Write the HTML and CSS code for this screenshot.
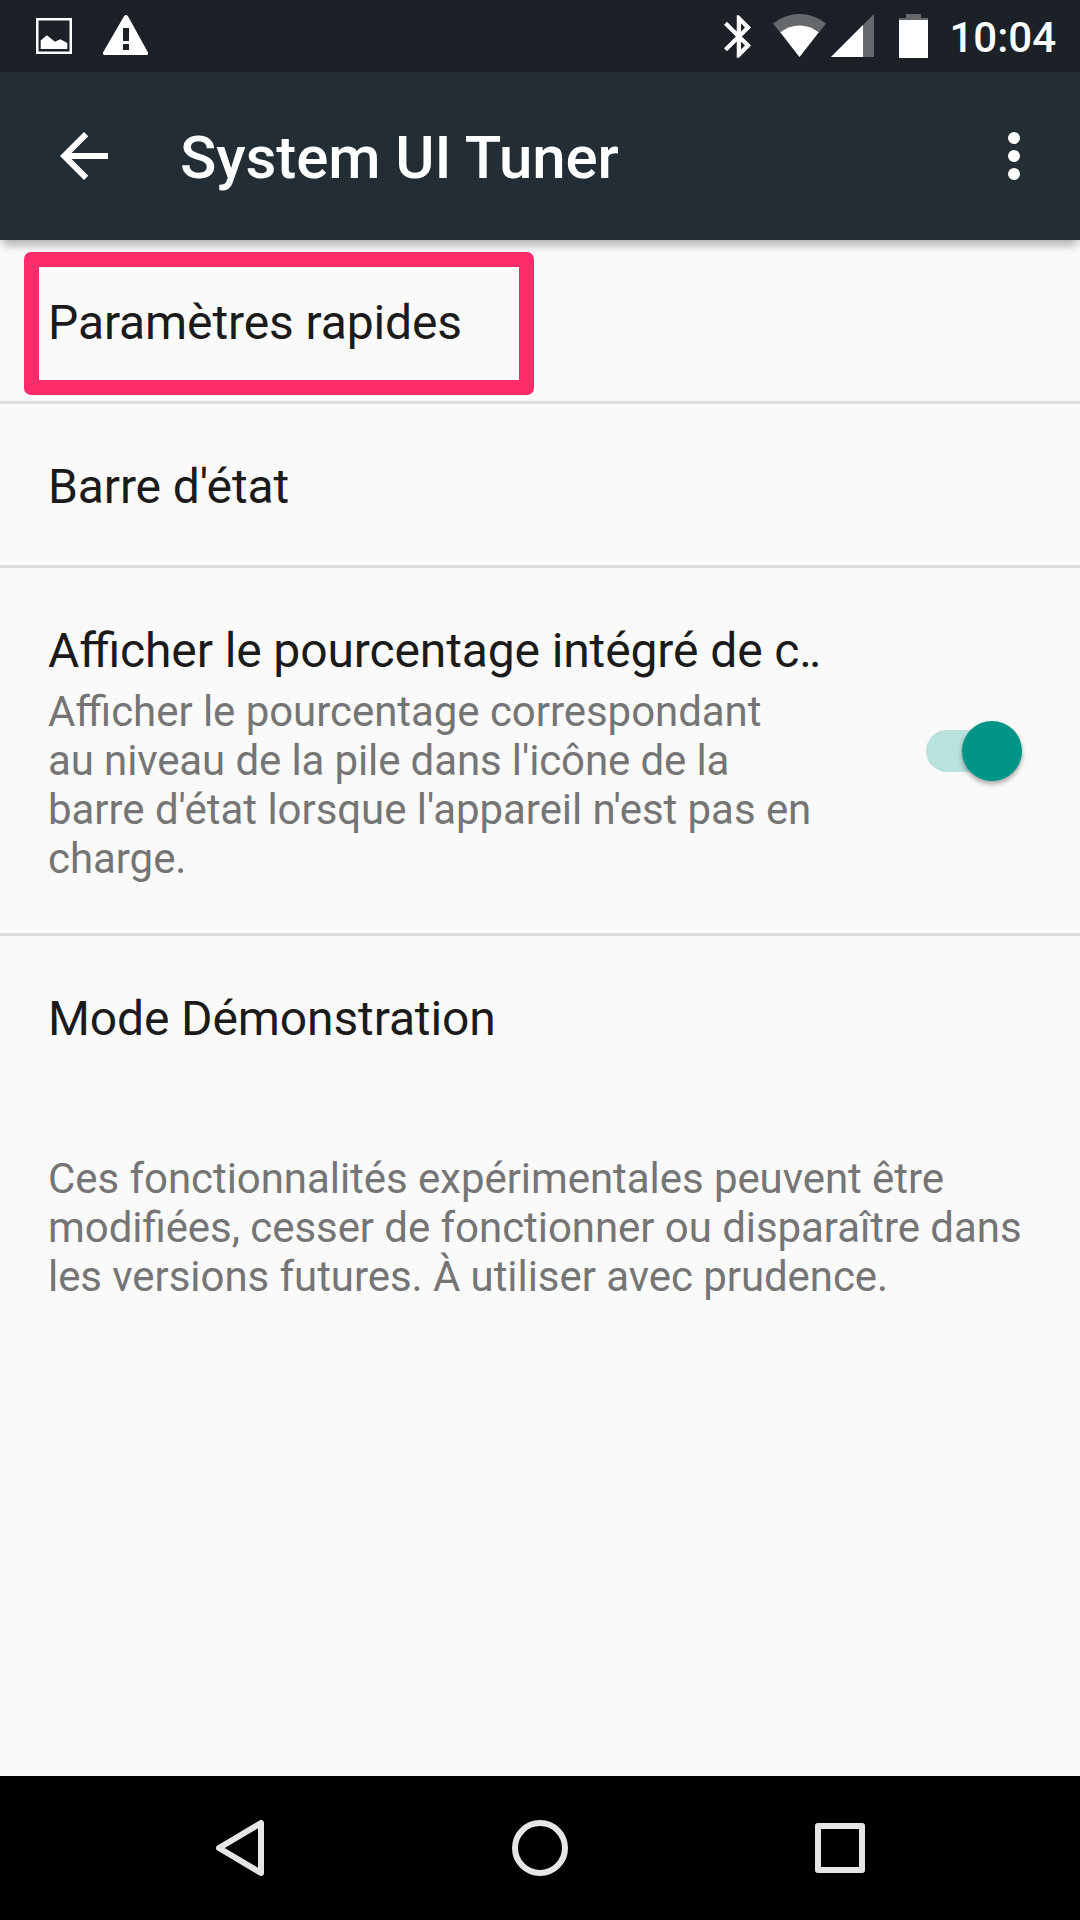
FILE: index.html
```html
<!DOCTYPE html>
<html lang="fr">
<head>
    <meta charset="UTF-8">
    <meta name="viewport" content="width=device-width, initial-scale=1.0">
    <title>System UI Tuner</title>

    <link rel="stylesheet" href="styles.css">
</head>
<body>
    <!-- Barre d'état -->
    <div class="status-bar">
        <svg class="icon-image" width="36" height="36" viewBox="0 0 36 36">
            <rect x="1.25" y="1.25" width="33.5" height="33.5" fill="none" stroke="#fff" stroke-width="2.5"/>
            <path d="M4.7 31V22.5L10.8 17.2 19 23.8 24.3 21.3 31.3 25V31Z" fill="#fff"/>
        </svg>
        <svg class="icon-warning" width="46" height="41" viewBox="0 0 46 41">
            <path fill="#fff" fill-rule="evenodd" d="M21 1.2Q23 -1 25 1.2L45 37.5V38.5Q45 40 43.5 40H1.5Q0 40 0 38.5V37.5ZM20 13H26V26H20ZM20 29H26V35H20Z"/>
        </svg>
        <div class="status-right">
            <svg class="icon-bluetooth" width="27" height="43" viewBox="5 2 12.71 20">
                <path fill="#fff" d="M17.71 7.71L12 2h-1v7.59L6.41 5 5 6.41 10.59 12 5 17.59 6.41 19 11 14.41V22h1l5.71-5.71-4.3-4.29 4.3-4.29zM13 5.83l1.88 1.88L13 9.59V5.83zm1.88 10.46L13 18.17v-3.76l1.88 1.88z"/>
            </svg>
            <svg class="icon-wifi" width="54" height="44" viewBox="0 0 54 44">
                <path d="M0 9.5Q12 0 26.5 0T53 9.5L26.5 43Z" fill="#65696c"/>
                <path d="M7.3 18.3Q16 11.5 26.5 11.5T45.7 18.3L26.5 43Z" fill="#fff"/>
            </svg>
            <svg class="icon-signal" width="44" height="44" viewBox="0 0 44 44">
                <path d="M0 43 43 0V43Z" fill="#65696c"/>
                <path d="M0 43 32 11V43Z" fill="#fff"/>
            </svg>
            <svg class="icon-battery" width="29" height="44" viewBox="0 0 29 44">
                <path d="M7 0H22V4H29V8H0V4H7Z" fill="#65696c"/>
                <path d="M0 6H29V44H0Z" fill="#fff"/>
            </svg>
            <span class="clock">10:04</span>
        </div>
    </div>

    <!-- Barre d'application -->
    <header class="app-bar">
        <svg class="icon-back" width="48" height="48" viewBox="4 4 16 16">
            <path fill="#fff" d="M20 11H7.83l5.59-5.59L12 4l-8 8 8 8 1.41-1.41L7.83 13H20v-2z"/>
        </svg>
        <h1>System UI Tuner</h1>
        <svg class="icon-more" width="12" height="48" viewBox="0 0 12 48">
            <g fill="#fff">
                <circle cx="6" cy="6" r="6"/>
                <circle cx="6" cy="24" r="6"/>
                <circle cx="6" cy="42" r="6"/>
            </g>
        </svg>
    </header>

    <!-- Liste des réglages -->
    <main>
        <div class="row">
            <p class="row-title">Paramètres rapides</p>
            <div class="highlight"></div>
        </div>
        <div class="row">
            <p class="row-title">Barre d'état</p>
        </div>
        <div class="row row-switch">
            <div class="row-text">
                <p class="row-title">Afficher le pourcentage intégré de c<span class="dots">..</span></p>
                <p class="summary">Afficher le pourcentage correspondant<br><span class="tight">au niveau de la pile dans l'icône de la</span><br>barre d'état lorsque l'appareil n'est pas en<br>charge.</p>
            </div>
            <div class="switch">
                <div class="thumb"></div>
            </div>
        </div>
        <div class="row row-last">
            <p class="row-title">Mode Démonstration</p>
        </div>
        <p class="summary note">Ces fonctionnalités expérimentales peuvent être<br>modifiées, cesser de fonctionner ou disparaître dans<br>les versions futures. À utiliser avec prudence.</p>
    </main>

    <!-- Barre de navigation -->
    <nav class="nav-bar">
        <svg width="56" height="56" viewBox="0 0 56 56">
            <path d="M49 3V53L7 28Z" fill="none" stroke="#e6e6e6" stroke-width="6" stroke-linejoin="round"/>
        </svg>
        <svg width="56" height="56" viewBox="0 0 56 56">
            <circle cx="28" cy="28" r="25" fill="none" stroke="#e6e6e6" stroke-width="6"/>
        </svg>
        <svg width="56" height="56" viewBox="0 0 56 56">
            <rect x="6" y="6" width="44" height="44" fill="none" stroke="#e6e6e6" stroke-width="6" stroke-linejoin="round"/>
        </svg>
    </nav>
</body>
</html>
```
FILE: styles.css
```css
* {
    box-sizing: border-box;
}

body {
    margin: 0;
    height: 1920px;
    display: flex;
    flex-direction: column;
    font-family: Roboto, sans-serif;
    background-color: #fafafa;
    color: #1b1b1b;
    overflow: hidden;
}

h1, p {
    margin: 0;
}

svg {
    display: block;
    flex: none;
}

/* Barre d'état */
.status-bar {
    height: 72px;
    flex: none;
    display: flex;
    align-items: flex-start;
    padding-left: 36px;
    padding-right: 24px;
    background-color: #1b2127;
}

.icon-image {
    margin-top: 18px;
}

.icon-warning {
    margin: 15px 0 0 31px;
}

.status-right {
    display: flex;
    margin-left: auto;
    padding-top: 14px;
}

.icon-bluetooth {
    margin-top: 1px;
}

.icon-wifi {
    margin-left: 22px;
}

.icon-signal {
    margin-left: 4px;
}

.icon-battery {
    margin-left: 24px;
}

.clock {
    margin-left: 21px;
    margin-top: -1px;
    font-size: 42px;
    line-height: 49px;
    font-weight: 500;
    color: #fff;
}

/* Barre d'application */
.app-bar {
    height: 168px;
    flex: none;
    display: flex;
    align-items: center;
    padding: 0 60px;
    background-color: #222d35;
    color: #fff;
    box-shadow: 0 7px 9px -2px rgba(0, 0, 0, 0.3);
}

.app-bar h1 {
    margin-left: 72px;
    padding-top: 4px;
    font-size: 60px;
    line-height: 70px;
    font-weight: 500;
    letter-spacing: -0.08px;
}

.icon-more {
    margin-left: auto;
}

/* Liste */
main {
    flex: 1;
}

.row {
    position: relative;
    height: 164px;
    display: flex;
    align-items: center;
    padding: 4px 48px 0;
    border-bottom: 3px solid #dcdcdc;
}

.row-title {
    font-size: 48px;
    line-height: 56px;
    letter-spacing: -0.12px;
    white-space: nowrap;
    font-feature-settings: "liga" 1; /* garde la ligature ffi */
}

.dots {
    letter-spacing: -2.8px;
}

.summary {
    font-size: 42px;
    line-height: 49px;
    color: #757575;
    letter-spacing: -0.05px;
    white-space: nowrap;
    font-feature-settings: "liga" 1;
}

.tight {
    letter-spacing: -0.12px;
}

.row-switch {
    height: 368px;
    justify-content: space-between;
}

.row-switch .summary {
    margin-top: 8px;
}

.row-last {
    border-bottom-color: transparent;
}

.note {
    padding: 54px 48px 0;
    letter-spacing: -0.06px;
}

/* Cadre autour du premier réglage */
.highlight {
    position: absolute;
    left: 24px;
    top: 12px;
    width: 510px;
    height: 143px;
    border: 15px solid #ff2b6b;
    border-radius: 7px;
}

/* Interrupteur */
.switch {
    width: 90px;
    height: 42px;
    margin-right: 16px;
    margin-top: -4px;
    display: flex;
    align-items: center;
    justify-content: flex-end;
    border-radius: 21px;
    background-color: #b9e1dd;
}

.thumb {
    width: 60px;
    height: 60px;
    margin-right: -6px;
    flex: none;
    border-radius: 50%;
    background-color: #009587;
    box-shadow: 0 3px 5px rgba(0, 0, 0, 0.35);
}

/* Barre de navigation */
.nav-bar {
    height: 144px;
    flex: none;
    display: flex;
    align-items: center;
    justify-content: center;
    gap: 244px;
    background-color: #000;
}
```
